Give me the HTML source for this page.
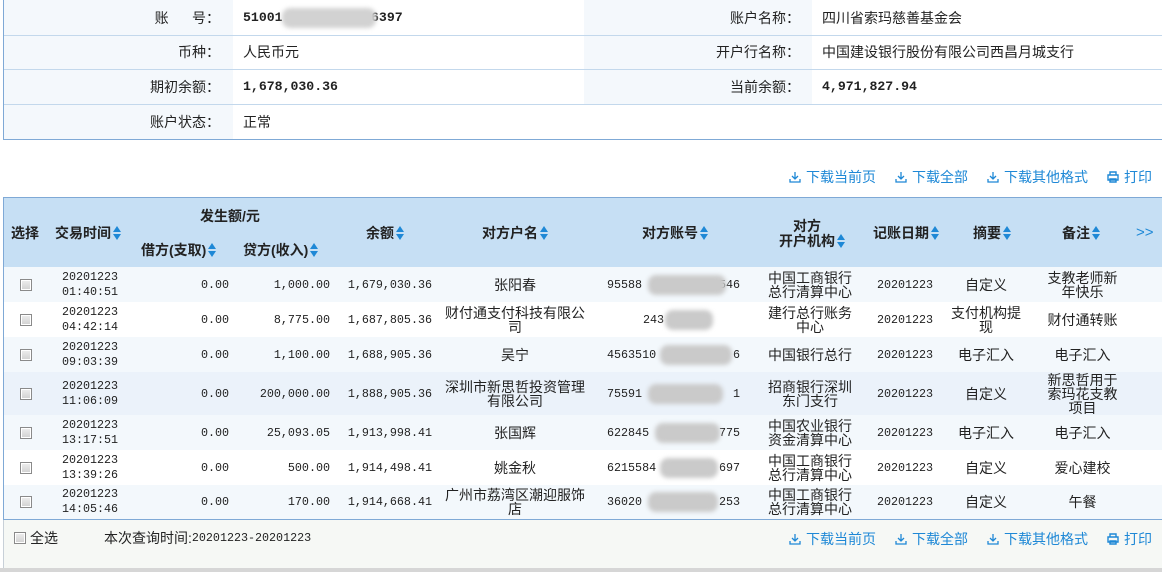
<!DOCTYPE html>
<html><head><meta charset="utf-8"><style>
*{margin:0;padding:0;box-sizing:border-box}
body{width:1162px;height:572px;overflow:hidden;background:#fff;font-family:"Liberation Sans","Noto Sans CJK SC",sans-serif;font-size:14px;color:#222;position:relative}
.a{position:absolute}
.c{position:absolute;display:flex;align-items:center;line-height:14px}
.ctr{justify-content:center;text-align:center}
.rt{justify-content:flex-end;text-align:right}
.m{font-family:"Liberation Mono","Noto Sans CJK SC",monospace;font-size:11.7px}
.b{font-weight:bold}
.big{font-size:13.2px}
.lbl{background:#f4f8fc}
.hl{position:absolute;height:1px;background:#c3d8ec}
.s{display:inline-block;width:8px;height:14px;margin-left:2px;vertical-align:middle;position:relative}
.s:before{content:"";position:absolute;left:0;top:0;border-left:4px solid transparent;border-right:4px solid transparent;border-bottom:6px solid #1e88d6}
.s:after{content:"";position:absolute;left:0;top:8px;border-left:4px solid transparent;border-right:4px solid transparent;border-top:6px solid #1e88d6}
.cb{width:12px;height:12px;border:1px solid #8a8a8a;background:linear-gradient(#eee,#d0d0d0);box-shadow:inset 0 0 0 1px #fff}
.blur{position:absolute;background:#cacaca;border-radius:8px;filter:blur(2px)}
.lk{position:absolute;color:#1e88d6;font-size:14px;display:flex;align-items:center}
.lk svg{margin-right:5px}
</style></head><body>

<div class="a" style="left:3px;top:0;width:1159px;height:140px;border-left:1px solid #7fa9d6;border-bottom:1px solid #7fa9d6"></div>
<div class="a lbl" style="left:4px;top:0;width:229px;height:139px"></div>
<div class="a lbl" style="left:584px;top:0;width:228px;height:104px"></div>
<div class="hl" style="left:4px;top:35px;width:1158px"></div>
<div class="hl" style="left:4px;top:69px;width:1158px"></div>
<div class="hl" style="left:4px;top:104px;width:1158px"></div>

<div class="c rt" style="left:100px;top:0;width:120px;height:35px">账&nbsp;&nbsp;&nbsp;&nbsp;&nbsp;&nbsp;号：</div>
<div class="c rt" style="left:100px;top:35px;width:120px;height:34px">币种：</div>
<div class="c rt" style="left:100px;top:69px;width:120px;height:35px">期初余额：</div>
<div class="c rt" style="left:100px;top:104px;width:120px;height:35px">账户状态：</div>
<div class="c m b big" style="left:243px;top:0;height:35px">51001</div>
<div class="c m b big" style="left:371px;top:0;height:35px">6397</div>
<div class="blur" style="left:282px;top:8px;width:94px;height:20px;background:#d2d2d2"></div>
<div class="c" style="left:243px;top:35px;height:34px">人民币元</div>
<div class="c m b big" style="left:243px;top:69px;height:35px">1,678,030.36</div>
<div class="c" style="left:243px;top:104px;height:35px">正常</div>

<div class="c rt" style="left:680px;top:0;width:120px;height:35px">账户名称：</div>
<div class="c rt" style="left:680px;top:35px;width:120px;height:34px">开户行名称：</div>
<div class="c rt" style="left:680px;top:69px;width:120px;height:35px">当前余额：</div>
<div class="c" style="left:822px;top:0;height:35px">四川省索玛慈善基金会</div>
<div class="c" style="left:822px;top:35px;height:34px">中国建设银行股份有限公司西昌月城支行</div>
<div class="c m b big" style="left:822px;top:69px;height:35px">4,971,827.94</div>

<div id="lk1"></div>

<div class="a" style="left:3px;top:197px;width:1159px;height:323px;border-left:1px solid #7fa9d6;border-top:1px solid #7fa9d6;border-bottom:1px solid #7fa9d6"></div>
<div class="a" style="left:4px;top:198px;width:1158px;height:69px;background:#c6dff4"></div>
<div class="a" style="left:4px;top:267px;width:1158px;height:35px;background:#f3f8fc"></div>
<div class="a" style="left:4px;top:337px;width:1158px;height:35px;background:#f3f8fc"></div>
<div class="a" style="left:4px;top:372px;width:1158px;height:43px;background:#ebf2fa"></div>
<div class="a" style="left:4px;top:415px;width:1158px;height:35px;background:#f3f8fc"></div>
<div class="a" style="left:4px;top:485px;width:1158px;height:34px;background:#f3f8fc"></div>

<div class="c b" style="left:11px;top:198px;height:69px">选择</div>
<div class="c b" style="left:55px;top:198px;height:69px">交易时间<span class="s"></span></div>
<div class="c b" style="left:200px;top:208px;height:16px">发生额/元</div>
<div class="c b" style="left:141px;top:242px;height:16px">借方(支取)<span class="s"></span></div>
<div class="c b" style="left:243px;top:242px;height:16px">贷方(收入)<span class="s"></span></div>
<div class="c b" style="left:366px;top:198px;height:69px">余额<span class="s"></span></div>
<div class="c b" style="left:482px;top:198px;height:69px">对方户名<span class="s"></span></div>
<div class="c b" style="left:642px;top:198px;height:69px">对方账号<span class="s"></span></div>
<div class="c b ctr" style="left:776px;top:217px;width:72px;height:32px;line-height:15px;align-items:flex-end"><span>对方<br>开户机构</span><span class="s" style="margin-bottom:1px"></span></div>
<div class="c b" style="left:873px;top:198px;height:69px">记账日期<span class="s"></span></div>
<div class="c b" style="left:973px;top:198px;height:69px">摘要<span class="s"></span></div>
<div class="c b" style="left:1062px;top:198px;height:69px">备注<span class="s"></span></div>
<div class="c" style="left:1136px;top:198px;height:69px;color:#1e88d6;font-size:15px">&gt;&gt;</div>

<div id="rows"></div>
<script>
var R=[
[267,35,"01:40:51","1,000.00","1,679,030.36","张阳春","95588","546",[648,78],"中国工商银行<br>总行清算中心","自定义","支教老师新<br>年快乐"],
[302,35,"04:42:14","8,775.00","1,687,805.36","财付通支付科技有限公<br>司","","",[665,48],"建行总行账务<br>中心","支付机构提<br>现","财付通转账"],
[337,35,"09:03:39","1,100.00","1,688,905.36","吴宁","4563510","6",[660,72],"中国银行总行","电子汇入","电子汇入"],
[372,43,"11:06:09","200,000.00","1,888,905.36","深圳市新思哲投资管理<br>有限公司","75591","1",[648,75],"招商银行深圳<br>东门支行","自定义","新思哲用于<br>索玛花支教<br>项目"],
[415,35,"13:17:51","25,093.05","1,913,998.41","张国辉","622845","775",[655,65],"中国农业银行<br>资金清算中心","电子汇入","电子汇入"],
[450,35,"13:39:26","500.00","1,914,498.41","姚金秋","6215584","697",[660,58],"中国工商银行<br>总行清算中心","自定义","爱心建校"],
[485,34,"14:05:46","170.00","1,914,668.41","广州市荔湾区潮迎服饰<br>店","36020","253",[648,70],"中国工商银行<br>总行清算中心","自定义","午餐"]];
var h="";
R.forEach(function(r,i){var t=r[0],H=r[1];
function cell(l,w,cls,txt){h+='<div class="c '+cls+'" style="left:'+l+'px;top:'+t+'px;width:'+w+'px;height:'+H+'px">'+txt+'</div>';}
cell(18,16,"ctr",'<div class="cb"></div>');
cell(50,80,"ctr m",'<span style="line-height:15px">20201223<br>'+r[2]+'</span>');
cell(130,99,"rt m","0.00");
cell(229,101,"rt m",r[3]);
cell(330,102,"rt m",r[4]);
cell(443,144,"ctr",'<span>'+r[5]+'</span>');
if(i==1){h+='<div class="c m" style="left:643px;top:'+t+'px;height:'+H+'px">243</div>';}
else{h+='<div class="c m" style="left:607px;top:'+t+'px;height:'+H+'px">'+r[6]+'</div>';
h+='<div class="c m rt" style="left:640px;width:100px;top:'+t+'px;height:'+H+'px">'+r[7]+'</div>';}
h+='<div class="blur" style="left:'+r[8][0]+'px;top:'+(t+H/2-10)+'px;width:'+r[8][1]+'px;height:20px"></div>';
cell(763,94,"ctr",'<span>'+r[9]+'</span>');
cell(865,80,"ctr m","20201223");
cell(950,72,"ctr",'<span>'+r[10]+'</span>');
cell(1040,85,"ctr",'<span>'+r[11]+'</span>');
});
document.getElementById("rows").outerHTML=h;
var dl='<svg width="12" height="12" viewBox="0 0 12 12"><path d="M6 1v7M3 5l3 3 3-3M1 8v3h10V8" fill="none" stroke="#1e88d6" stroke-width="1.3"/></svg>';
var pr='<svg width="12" height="12" viewBox="0 0 12 12"><path d="M3 4V1h6v3M1 4h10v5H1zM3 8h6v3H3z" fill="none" stroke="#1e88d6" stroke-width="1.4"/></svg>';
function links(y){return '<div class="lk" style="left:789px;top:'+y+'px">'+dl+'下载当前页</div><div class="lk" style="left:895px;top:'+y+'px">'+dl+'下载全部</div><div class="lk" style="left:987px;top:'+y+'px">'+dl+'下载其他格式</div><div class="lk" style="left:1107px;top:'+y+'px">'+pr+'打印</div>';}
document.getElementById("lk1").outerHTML=links(167)+'<div class="a" style="left:3px;top:520px;width:1159px;height:48px;background:#f6f8f5;border-left:1px solid #c8d0d8"></div>'+links(529);
</script>
<div class="c" style="left:14px;top:529px;height:18px"><div class="cb" style="margin-right:4px"></div>全选</div>
<div class="c" style="left:104px;top:529px;height:18px">本次查询时间:<span class="m">20201223-20201223</span></div>
<div class="a" style="left:0;top:568px;width:1162px;height:4px;background:#d6d6d6"></div>
</body></html>
